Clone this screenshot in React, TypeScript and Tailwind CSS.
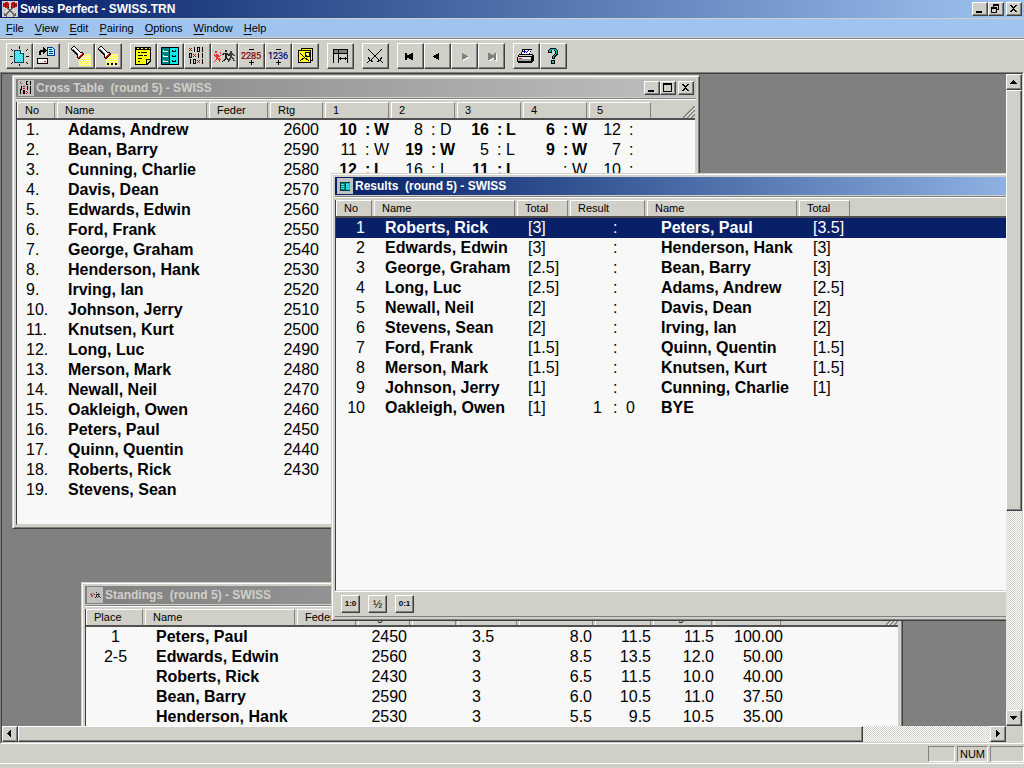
import type { ReactNode } from "react";

type Column = { label: string; width: string; cell: string };
type Cell = ReactNode;

const RAISED =
  "border border-white border-r-[#404040] border-b-[#404040] bg-[#d0d0c8] shadow-[inset_-1px_-1px_0_#808080]";

const menus = ["File", "View", "Edit", "Pairing", "Options", "Window", "Help"];

const players: [string, string][] = [
  ["Adams, Andrew", "2600"],
  ["Bean, Barry", "2590"],
  ["Cunning, Charlie", "2580"],
  ["Davis, Dean", "2570"],
  ["Edwards, Edwin", "2560"],
  ["Ford, Frank", "2550"],
  ["George, Graham", "2540"],
  ["Henderson, Hank", "2530"],
  ["Irving, Ian", "2520"],
  ["Johnson, Jerry", "2510"],
  ["Knutsen, Kurt", "2500"],
  ["Long, Luc", "2490"],
  ["Merson, Mark", "2480"],
  ["Newall, Neil", "2470"],
  ["Oakleigh, Owen", "2460"],
  ["Peters, Paul", "2450"],
  ["Quinn, Quentin", "2440"],
  ["Roberts, Rick", "2430"],
  ["Stevens, Sean", ""],
];

// [opponent, result, played with white]
const rounds: [string, string, boolean][][] = [
  [["10", "W", true], ["8", "D", false], ["16", "L", true], ["6", "W", true], ["12", "", false]],
  [["11", "W", false], ["19", "W", true], ["5", "L", false], ["9", "W", true], ["7", "", false]],
  [["12", "L", true], ["16", "L", false], ["11", "L", true], ["", "W", false], ["10", "", false]],
];

const pairings: [string, string, string, string][] = [
  ["Roberts, Rick", "[3]", "Peters, Paul", "[3.5]"],
  ["Edwards, Edwin", "[3]", "Henderson, Hank", "[3]"],
  ["George, Graham", "[2.5]", "Bean, Barry", "[3]"],
  ["Long, Luc", "[2.5]", "Adams, Andrew", "[2.5]"],
  ["Newall, Neil", "[2]", "Davis, Dean", "[2]"],
  ["Stevens, Sean", "[2]", "Irving, Ian", "[2]"],
  ["Ford, Frank", "[1.5]", "Quinn, Quentin", "[1.5]"],
  ["Merson, Mark", "[1.5]", "Knutsen, Kurt", "[1.5]"],
  ["Johnson, Jerry", "[1]", "Cunning, Charlie", "[1]"],
  ["Oakleigh, Owen", "[1]", "BYE", ""],
];

const standings: string[][] = [
  ["1", "Peters, Paul", "", "2450", "", "3.5", "8.0", "11.5", "11.5", "100.00"],
  ["2-5", "Edwards, Edwin", "", "2560", "", "3", "8.5", "13.5", "12.0", "50.00"],
  ["", "Roberts, Rick", "", "2430", "", "3", "6.5", "11.5", "10.0", "40.00"],
  ["", "Bean, Barry", "", "2590", "", "3", "6.0", "10.5", "11.0", "37.50"],
  ["", "Henderson, Hank", "", "2530", "", "3", "5.5", "9.5", "10.5", "35.00"],
];

const crossColumns: Column[] = [
  { label: "No", width: "w-[40px]", cell: "pl-[9px]" },
  { label: "Name", width: "w-[152px]", cell: "pl-[11px] font-bold" },
  { label: "Feder", width: "w-[61px]", cell: "" },
  { label: "Rtg", width: "w-[55px]", cell: "pr-1.5 text-right" },
  { label: "1", width: "w-[66px]", cell: "" },
  { label: "2", width: "w-[66px]", cell: "" },
  { label: "3", width: "w-[66px]", cell: "" },
  { label: "4", width: "w-[66px]", cell: "" },
  { label: "5", width: "w-[64px]", cell: "" },
];

const resultColumns: Column[] = [
  { label: "No", width: "w-[38px]", cell: "pr-[9px] text-right" },
  { label: "Name", width: "w-[143px]", cell: "pl-[11px] font-bold" },
  { label: "Total", width: "w-[53px]", cell: "pl-[11px]" },
  { label: "Result", width: "w-[77px]", cell: "" },
  { label: "Name", width: "w-[152px]", cell: "pl-3.5 font-bold" },
  { label: "Total", width: "w-[53px]", cell: "pl-3.5" },
];

const standingColumns: Column[] = [
  { label: "Place", width: "w-[59px]", cell: "text-center" },
  { label: "Name", width: "w-[152px]", cell: "pl-[11px] font-bold" },
  { label: "Feder", width: "w-[61px]", cell: "" },
  { label: "Rtg", width: "w-[54px]", cell: "pr-[5px] text-right" },
  { label: "Loc", width: "w-[46px]", cell: "" },
  { label: "Score", width: "w-[61px]", cell: "pl-3.5" },
  { label: "M-Buch.", width: "w-[76px]", cell: "pr-[3px] text-right" },
  { label: "Buch.", width: "w-[58px]", cell: "pr-0.5 text-right" },
  { label: "Progr.", width: "w-[61px]", cell: "text-right" },
  { label: "Prize", width: "w-[69px]", cell: "text-right" },
];

/* ---------- icons ---------- */

function Glyph({ children }: { children: ReactNode }) {
  return (
    <svg width="22" height="20" viewBox="0 0 22 20" shapeRendering="crispEdges" aria-hidden>
      {children}
    </svg>
  );
}

// checkerboard of single pixels
function Dots({ x, y, w, h, fill }: { x: number; y: number; w: number; h: number; fill: string }) {
  let d = "";
  for (let j = 0; j < h; j++) {
    for (let i = j % 2; i < w; i += 2) d += `M${x + i} ${y + j}h1v1h-1z`;
  }
  return <path d={d} fill={fill} />;
}

function NewIcon() {
  return (
    <Glyph>
      <path d="M5.500 4.500h6l3 3v9h-9z" fill="#80f0ff" />
      <Dots x={6} y={5} w={8} h={11} fill="#20d8e8" />
      <path d="M5.500 4.500h6l3 3v9h-9z" fill="none" stroke="#004060" />
      <path d="M11.500 4.500v3h3" fill="#fff" stroke="#004060" />
      <path
        d="M10 0h1v3h-1zM10 18h1v2h-1zM1 10h3v1h-3zM17 10h3v1h-3zM2 3h1v1h-1zM3 4h1v1h-1zM17 4h1v1h-1zM18 3h1v1h-1zM3 16h1v1h-1zM2 17h1v1h-1zM17 16h1v1h-1zM18 17h1v1h-1z"
        fill="#000"
      />
    </Glyph>
  );
}

function OpenIcon() {
  return (
    <Glyph>
      <path d="M3 9V5h1V4h3V1h1v1h1v1h1v1h1v1h-1v1H9v1H8v1H7V6H5v3z" fill="#000" />
      <path d="M11.500 1.500h5l2 2v6h-7z" fill="#a0ffff" stroke="#003090" />
      <path d="M13 3h3v1h-3zM13 5h4v1h-4zM13 7h4v1h-4z" fill="#003090" />
      <path d="M1.500 12.500h10v5h-10z" fill="#e8e8e8" stroke="#000" />
      <path d="M2 13h9v2H2z" fill="#fff" />
      <path d="M8 15h2v1H8z" fill="#f00" />
    </Glyph>
  );
}

function TorchIcon({ more }: { more?: boolean }) {
  return (
    <Glyph>
      <path d="M10 8h10v12H8v-8z" fill="#fff8d8" />
      <Dots x={8} y={12} w={12} h={8} fill="#ffff40" />
      <Dots x={12} y={8} w={8} h={4} fill="#ffff40" />
      <path d="M0 2h1V1h1V0h2v1h1v1h1v1h1v1h1v1h1v1h3v1h1v2h-1v1h-1v1h-1v1H9v1H7v-1H6V9H5V8H4V7H3V6H2V5H1V4H0z" fill="#000" />
      <path d="M1 2h1V1h2v1h1v1h1v1h1v1h1v1h1v1h2v1h-1v1H9v1H8v1H7V8H6V7H5V6H4V5H3V4H2V3H1z" fill="#fff" />
      <path d="M1 3h2v1h1v1h1v1h1v1h1v1H6V7H5V6H4V5H3V4H1z" fill="#808080" />
      <path d="M7 11h1v-1h1V9h1V8h1V7h1v2h-1v1h-1v1H9v1H7z" fill="#f00000" />
      {more && <path d="M9 17h2v2H9zM13 17h2v2h-2zM17 17h2v2h-2z" fill="#000" />}
    </Glyph>
  );
}

function NotesIcon() {
  return (
    <Glyph>
      <path d="M2 1h16v14l-4 4H2z" fill="#000" />
      <path d="M3 4h14v9h-4v5H3zM14 14h3l-3 3z" fill="#ffff00" />
      <path d="M4 2h2v1H4zM8 2h2v1H8zM12 2h2v1h-2zM16 2h1v1h-1z" fill="#ffff00" />
      <path d="M5 6h2v1H5zM8 6h6v1H8zM5 9h5v1H5zM11 9h3v1h-3zM5 12h4v1H5zM5 15h2v1H5z" fill="#000" />
    </Glyph>
  );
}

function BoardIcon() {
  return (
    <Glyph>
      <rect x="1" y="1" width="18" height="18" fill="#000" />
      <rect x="2" y="2" width="7" height="16" fill="#008080" />
      <rect x="10" y="2" width="8" height="16" fill="#00f0f0" />
      <path d="M3 4h1v1h4v1H3zM3 9h1v1h4v1H3zM3 14h1v1h4v1H3z" fill="#fff" />
      <path d="M12 4h1v1h2V4h1v2h-4zM12 9h1v1h2V9h1v2h-4zM12 14h1v1h2v-1h1v2h-4z" fill="#000" />
    </Glyph>
  );
}

function CrossIcon({ size = 20 }: { size?: number }) {
  const marks = ["x101", "0x11", "10x1"];
  return (
    <svg width={size} height={size} viewBox="0 0 20 20" shapeRendering="crispEdges" aria-hidden>
      {marks.map((row, y) =>
        row.split("").map((mark, x) => (
          <g key={`${x}-${y}`} transform={`translate(${2 + x * 4} ${1 + y * 6})`}>
            {mark === "x" && <path d="M0 1h1v1h1v-1h1v1h-1v1h1v1h-1v-1h-1v1h-1v-1h1v-1h-1z" fill="#e00000" />}
            {mark === "0" && <path d="M0 0h3v5h-3zM1 1v3h1v-3z" fillRule="evenodd" />}
            {mark === "1" && <path d="M1 0h1v5h-1z" />}
          </g>
        )),
      )}
    </svg>
  );
}

function RunnersIcon({ width = 22, height = 20 }: { width?: number; height?: number }) {
  return (
    <svg width={width} height={height} viewBox="0 0 22 20" shapeRendering="crispEdges" aria-hidden>
      <path
        d="M1 5h2v2H1zM0 8h1v1h1V8h2v1h1v1h1V9h1v1H6v1H4v1h2v1h1v1H6v2H5v-2H4v-1H3v1H2v1H1v1H0v-1h1v-1h1v-3H1v-1H0zM6 6h1v2H6z"
        fill="#f03030"
      />
      <path
        d="M11 4h2v2h-2zM8 8h1V7h5v1h1v1h1v1h-2V9h-1v3h1v1h1v3h-1v-2h-1v-1h-1v1h-1v1H9v1H8v-1h1v-1h1v-1h1V8h-1v1H8z"
        fill="#202020"
      />
      <path
        d="M16 5h2v2h-2zM15 7h4v1h1v1h1v1h-2V9h-1v2h1v1h1v2h1v1h-2v-2h-1v-1h-1v2h-1v1h-2v-1h1v-2h1V9h-1z"
        fill="#404040"
      />
    </svg>
  );
}

function NumberIcon({ value, color }: { value: string; color: string }) {
  return (
    <Glyph>
      <path d="M8 3h5v1H8zM8 16h5v1H8zM10 14h1v5h-1z" fill="#000" />
      <text
        x="10"
        y="13"
        textAnchor="middle"
        fontSize="9"
        fill={color}
        stroke={color}
        strokeWidth="0.2"
        fontFamily="Roboto, sans-serif"
      >
        {value}
      </text>
    </Glyph>
  );
}

function WallChartIcon() {
  return (
    <Glyph>
      <path d="M6.500 2.500h11v12h-11z" fill="#ffff00" stroke="#000" />
      <path d="M3.500 4.500h12v12h-12z" fill="#ffff00" stroke="#000" />
      <path d="M5 7l4 4 5 4M5 15l5-4 4-5M10 6h4v4h-4z" fill="none" stroke="#000" />
      <path d="M11 7h2v2h-2z" fill="#fff" />
    </Glyph>
  );
}

function ColumnsIcon() {
  return (
    <Glyph>
      <path d="M3 3h15v5H3z" fill="#808080" />
      <path d="M3 3h15v1H3zM3 7h15v1H3zM3 3h1v14H3zM8 3h1v14H8zM17 3h1v14h-1zM9 12h8v1H9zM10 11h1v3h-1zM15 11h1v3h-1z" fill="#000" />
    </Glyph>
  );
}

function SwordsIcon() {
  return (
    <Glyph>
      <path d="M3 3l12 12M17 3L5 15M3 11l2 3 3 2M17 11l-2 3-3 2M5 14l-3 3M15 14l3 3" fill="none" stroke="#000" />
    </Glyph>
  );
}

function StepIcon({ next, edge, disabled }: { next?: boolean; edge?: boolean; disabled?: boolean }) {
  const shape = (
    <>
      <path d="M12 7v7h-1v-1h-2v-1H7v-1H6v-1h1V9h2V8h2V7z" />
      {edge && <path d="M5 7h2v7H5zM12 7h1v7h-1z" />}
    </>
  );
  return (
    <Glyph>
      <g transform={next ? "translate(20 0) scale(-1 1)" : undefined}>
        {disabled && (
          <g fill="#fff" transform="translate(-1 1)">
            {shape}
          </g>
        )}
        <g fill={disabled ? "#808080" : "#000"}>{shape}</g>
      </g>
    </Glyph>
  );
}

function PrintIcon() {
  return (
    <Glyph>
      <path d="M6 3h10v1h-1v2h-1v2h3v1h1v6h-1v1h-1v1H2v-1H1v-5h1V9h1V8h2V6h1z" fill="#000" />
      <path d="M7 4h8v1h-1v2h-1v1H6V6h1z" fill="#fff" />
      <path d="M8 4h1v1h1v1h1V5h1V4h1v1h-1v1h-1v1h-1V6H9v1H8V6H7V5h1z" fill="#0000d0" />
      <path d="M3 9h13v1H3z" fill="#d0d0c8" />
      <path d="M2 11h13v2H2z" fill="#e8e8e8" />
      <path d="M2 13h13v2H2z" fill="#a0a0a0" />
      <path d="M3 12h3v1H3z" fill="#f00" />
    </Glyph>
  );
}

function HelpIcon() {
  return (
    <Glyph>
      <path d="M7 2h6v1h1v1h1v5h-1v1h-1v1h-1v2H9v-3h1V9h1V8h1V5h-1V4H9v3H5V4h1V3h1zM8 14h4v4H8z" fill="#000" />
      <path d="M7 3h6v1h1v4h-1v1h-1v1h-1v2h-1v-2h1V9h1V8h1V5h-1V4H8v2H6V4h1zM9 15h2v2H9z" fill="#00c0c0" />
    </Glyph>
  );
}

function AppIcon() {
  return (
    <svg width="16" height="16" viewBox="0 0 16 16" shapeRendering="crispEdges" aria-hidden>
      <rect width="16" height="16" fill="#d0d0d0" />
      <path d="M4 5l9 10M12 5L3 15M2 13l3 2M14 13l-3 2" stroke="#606060" strokeWidth="1.500" fill="none" />
      <path d="M1 2h2V1h3v1h1v4H5v1H3V6H1zM9 2h1V1h3v1h2v4h-2v1h-2V6H9z" fill="#c01010" />
      <path d="M3 3h1v2H3zM12 3h1v2h-1zM6 6h1v1H6zM9 6h1v1H9z" fill="#300" />
    </svg>
  );
}

function BoardMiniIcon() {
  return (
    <svg width="16" height="16" viewBox="0 0 16 16" shapeRendering="crispEdges" aria-hidden>
      <rect width="16" height="16" fill="#c0c0c0" />
      <path d="M3 4h10v9H3z" fill="#003840" />
      <path d="M4 5h4v7H4z" fill="#008888" />
      <path d="M9 5h4v7H9z" fill="#00c8c8" />
      <path d="M4 6h3v1H4zM4 8h3v1H4zM4 10h3v1H4zM9 6h3v1H9zM9 8h3v1H9zM9 10h3v1H9z" fill="#40e8e8" />
    </svg>
  );
}

/* ---------- window chrome ---------- */

function CaptionButton({ label, children }: { label: string; children: ReactNode }) {
  return (
    <button type="button" aria-label={label} className={`h-[14px] w-4 ${RAISED}`}>
      <svg width="14" height="12" viewBox="0 0 14 12" shapeRendering="crispEdges" aria-hidden>
        {children}
      </svg>
    </button>
  );
}

function CaptionButtons({ restore }: { restore?: boolean }) {
  return (
    <div className="ml-auto flex pr-0.5">
      <CaptionButton label="Minimize">
        <path d="M3 8h6v2H3z" />
      </CaptionButton>
      {restore ? (
        <CaptionButton label="Restore">
          <path d="M4 1h6v6H8v3H2V4h2zM5 3v1h3v2h1V3zM3 6v3h4V6z" fillRule="evenodd" />
        </CaptionButton>
      ) : (
        <CaptionButton label="Maximize">
          <path d="M2 1h9v9H2zM3 3v6h7V3z" fillRule="evenodd" />
        </CaptionButton>
      )}
      <div className="w-0.5" />
      <CaptionButton label="Close">
        <path d="M3 2h2v1h1v1h1V3h1V2h2v1H9v1H8v1H7v1h1v1h1v1h1v1H8V8H7V7H6v1H5v1H3V8h1V7h1V6h1V5H5V4H4V3H3z" />
      </CaptionButton>
    </div>
  );
}

type ChildWindowProps = {
  title: string;
  icon: ReactNode;
  place: string;
  active?: boolean;
  buttons?: boolean;
  children: ReactNode;
};

function ChildWindow({ title, icon, place, active, buttons, children }: ChildWindowProps) {
  return (
    <section
      aria-label={title}
      className={`absolute flex flex-col border border-[#d0d0c8] border-r-[#404040] border-b-[#404040] bg-[#d0d0c8] p-[3px] shadow-[inset_1px_1px_0_#fff,inset_-1px_-1px_0_#808080] ${place}`}
    >
      <header
        className={`flex h-[18px] shrink-0 items-center bg-linear-to-r pl-0.5 ${
          active ? "from-[#082068] to-[#a0c4f0] text-white" : "from-[#808080] to-[#c0c0c0] text-[#d0d0c8]"
        }`}
      >
        {icon}
        <h2 className="pl-0.5 text-[12px] leading-4 font-bold whitespace-pre">{title}</h2>
        {buttons && <CaptionButtons />}
      </header>
      <div className="mt-px mb-0.5 shrink-0 border-t border-b border-t-[#808080] border-b-white" />
      {children}
    </section>
  );
}

function Grip() {
  return (
    <svg width="12" height="12" viewBox="0 0 12 12" aria-hidden>
      <path d="M0 12L12 0M4 12l8-8M8 12l4-4" stroke="#808080" strokeWidth="1.500" />
      <path d="M2 12L12 2M6 12l6-6" stroke="#fff" />
    </svg>
  );
}

function ListView({ columns, rows, selected }: { columns: Column[]; rows: Cell[][]; selected?: number }) {
  return (
    <div className="min-h-0 flex-1 overflow-hidden border-r border-b border-l border-[#d0d0c8] border-l-[#404040] bg-[#f8f8f8]">
      <table className="w-full table-fixed border-separate border-spacing-0">
        <thead className="bg-[#d0d0c8]">
          <tr className="h-[18px]">
            {columns.map((column, i) => (
              <th key={i} scope="col" className={`border-b-2 border-[#505050] p-0 pr-0.5 text-left ${column.width}`}>
                <div className="h-4 truncate border-t border-r border-l border-white border-r-[#808080] pl-[7px] text-[11px] leading-[14px] font-normal">
                  {column.label}
                </div>
              </th>
            ))}
            <td className="border-b-2 border-[#505050] p-0">
              <div className="flex h-4 items-end justify-end">
                <Grip />
              </div>
            </td>
          </tr>
        </thead>
        <tbody>
          {rows.map((row, r) => (
            <tr key={r} className={`h-5 ${r === selected ? "bg-[#082068] text-white" : ""}`}>
              {row.map((cell, c) => (
                <td key={c} className={`p-0 text-base leading-5 whitespace-nowrap ${columns[c].cell}`}>
                  {cell}
                </td>
              ))}
              <td className="p-0" />
            </tr>
          ))}
        </tbody>
      </table>
    </div>
  );
}

function Game({ game }: { game?: [string, string, boolean] }) {
  if (!game) return null;
  const [opponent, result, white] = game;
  return (
    <div className={`flex ${white ? "font-bold" : ""}`}>
      <span className="w-8 text-right">{opponent}</span>
      <span className="ml-2 w-[9px]">:</span>
      <span>{result}</span>
    </div>
  );
}

function Score({ left, right }: { left: string; right: string }) {
  return (
    <div className="flex">
      <span className="w-8 text-right">{left}</span>
      <span className="ml-[11px] w-[13px]">:</span>
      <span>{right}</span>
    </div>
  );
}

/* ---------- bars ---------- */

const toolbar: { label: string; icon: ReactNode; disabled?: boolean }[][] = [
  [
    { label: "New", icon: <NewIcon /> },
    { label: "Open", icon: <OpenIcon /> },
  ],
  [
    { label: "Find", icon: <TorchIcon /> },
    { label: "Find next", icon: <TorchIcon more /> },
  ],
  [
    { label: "Details", icon: <NotesIcon /> },
    { label: "Results", icon: <BoardIcon /> },
    { label: "Cross table", icon: <CrossIcon /> },
    { label: "Standings", icon: <RunnersIcon /> },
    { label: "Ratings", icon: <NumberIcon value="2285" color="#800000" /> },
    { label: "Numbers", icon: <NumberIcon value="1236" color="#000080" /> },
    { label: "Wall chart", icon: <WallChartIcon /> },
  ],
  [{ label: "Columns", icon: <ColumnsIcon /> }],
  [{ label: "Pair", icon: <SwordsIcon /> }],
  [
    { label: "First round", icon: <StepIcon edge /> },
    { label: "Previous round", icon: <StepIcon /> },
    { label: "Next round", icon: <StepIcon next disabled />, disabled: true },
    { label: "Last round", icon: <StepIcon next edge disabled />, disabled: true },
  ],
  [
    { label: "Print", icon: <PrintIcon /> },
    { label: "Help", icon: <HelpIcon /> },
  ],
];

function Toolbar() {
  return (
    <div role="toolbar" className="flex h-8 shrink-0 gap-2 pt-[3px] pl-1.5">
      {toolbar.map((group, i) => (
        <div key={i} className="flex">
          {group.map((tool) => (
            <button
              key={tool.label}
              type="button"
              aria-label={tool.label}
              disabled={tool.disabled}
              className={`flex h-[26px] w-[27px] items-center pl-0.5 ${RAISED}`}
            >
              {tool.icon}
            </button>
          ))}
        </div>
      ))}
    </div>
  );
}

function ScrollButton({ label, d }: { label: string; d: string }) {
  return (
    <button type="button" aria-label={label} className={`size-4 shrink-0 ${RAISED}`}>
      <svg width="14" height="14" viewBox="0 0 14 14" shapeRendering="crispEdges" aria-hidden>
        <path d={d} />
      </svg>
    </button>
  );
}

const TRACK = "bg-[repeating-conic-gradient(#fff_0_25%,#d0d0c8_0_50%)] bg-[length:2px_2px]";

export default function App() {
  const crossRows: Cell[][] = players.map(([name, rating], i) => [
    `${i + 1}.`,
    name,
    "",
    rating,
    ...[0, 1, 2, 3, 4].map((round) => <Game key={round} game={rounds[i]?.[round]} />),
  ]);

  const resultRows: Cell[][] = pairings.map(([white, whiteTotal, black, blackTotal], i) => [
    i + 1,
    white,
    whiteTotal,
    <Score key="score" left={black === "BYE" ? "1" : ""} right={black === "BYE" ? "0" : ""} />,
    black,
    blackTotal,
  ]);

  return (
    <div className="flex h-screen flex-col overflow-hidden bg-[#d0d0c8] font-['Liberation_Sans',Arial,sans-serif] text-black">
      <header className="flex h-[18px] shrink-0 items-center bg-linear-to-r from-[#082068] to-[#a0c4f0] pl-0.5 text-white">
        <AppIcon />
        <h1 className="pl-0.5 text-[12px] leading-4 font-bold">Swiss Perfect - SWISS.TRN</h1>
        <CaptionButtons restore />
      </header>

      <nav className="mt-px flex h-[18px] shrink-0 items-center gap-[11px] bg-[#a0c4f0] pl-1.5 text-[11px] leading-4">
        {menus.map((menu) => (
          <button key={menu} type="button">
            <span className="underline underline-offset-2">{menu[0]}</span>
            {menu.slice(1)}
          </button>
        ))}
      </nav>
      <div className="mt-px shrink-0 border-t border-b border-t-[#808080] border-b-white" />

      <Toolbar />

      <main className="flex min-h-0 flex-1 flex-col border border-[#808080] border-r-white border-b-white">
        <div className="flex min-h-0 flex-1 flex-col border border-[#404040] border-r-[#d0d0c8] border-b-[#d0d0c8]">
          <div className="flex min-h-0 flex-1">
            <div className="relative min-w-0 flex-1 overflow-hidden bg-[#808080]">
              <ChildWindow
                title="Cross Table  (round 5) - SWISS"
                icon={
                  <span className="flex size-4 items-center justify-center bg-[#c0c0c0]">
                    <CrossIcon size={16} />
                  </span>
                }
                place="top-px left-2.5 h-[454px] w-[688px]"
                buttons
              >
                <ListView columns={crossColumns} rows={crossRows} />
              </ChildWindow>

              <ChildWindow
                title="Standings  (round 5) - SWISS"
                icon={
                  <span className="flex size-4 items-center justify-center bg-[#c0c0c0]">
                    <RunnersIcon width={11} height={10} />
                  </span>
                }
                place="top-[508px] left-[79px] h-[260px] w-[822px]"
              >
                <ListView columns={standingColumns} rows={standings} />
              </ChildWindow>

              <ChildWindow
                title="Results  (round 5) - SWISS"
                icon={<BoardMiniIcon />}
                place="top-[99px] left-[329px] h-[448px] w-[760px]"
                active
              >
                <ListView columns={resultColumns} rows={resultRows} selected={0} />
                <div className="flex h-[26px] shrink-0 gap-2 border-t border-b border-t-white border-b-[#808080] pt-[3px] pl-1.5">
                  {["1:0", "½", "0:1"].map((score) => (
                    <button
                      key={score}
                      type="button"
                      className={`flex h-[18px] w-[19px] items-center justify-center leading-none ${
                        score === "½" ? "text-[11px]" : "text-[8px] font-bold"
                      } ${RAISED}`}
                    >
                      {score}
                    </button>
                  ))}
                </div>
              </ChildWindow>
            </div>

            <div className={`flex w-4 shrink-0 flex-col ${TRACK}`}>
              <ScrollButton label="Scroll up" d="M6 5h1v1h1v1h1v1h1v1H3V8h1V7h1V6h1z" />
              <div className={`flex-[21] ${RAISED}`} />
              <div className="flex-[10]" />
              <ScrollButton label="Scroll down" d="M3 5h7v1H9v1H8v1H7v1H6V8H5V7H4V6H3z" />
            </div>
          </div>

          <div className="flex h-4 shrink-0 pr-4">
            <div className={`flex flex-1 ${TRACK}`}>
              <ScrollButton label="Scroll left" d="M8 3v7H7V9H6V8H5V7H4V6h1V5h1V4h1V3z" />
              <div className={`flex-[20] ${RAISED}`} />
              <div className="flex-[3]" />
              <ScrollButton label="Scroll right" d="M5 3v7h1V9h1V8h1V7h1V6H8V5H7V4H6V3z" />
            </div>
          </div>
        </div>
      </main>

      <footer className="h-6 shrink-0">
        <div className="flex h-5 items-center justify-end gap-0.5 border-b border-white text-[11px] leading-[14px]">
          <div className="h-4 w-[27px] border border-[#808080] border-r-white border-b-white" />
          <div className="h-4 w-[31px] border border-[#808080] border-r-white border-b-white text-center">NUM</div>
          <div className="h-4 w-[34px] border border-[#808080] border-r-white border-b-white" />
        </div>
      </footer>
    </div>
  );
}
